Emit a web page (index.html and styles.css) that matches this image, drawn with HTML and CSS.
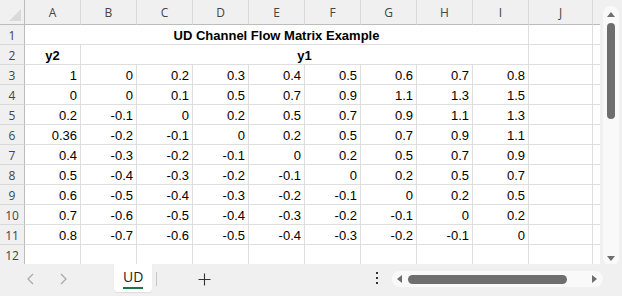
FILE: index.html
```html
<!DOCTYPE html>
<html>
<head>
<meta charset="utf-8">
<link rel="stylesheet" href="styles.css">
</head>
<body>
<div class="app">
  <div class="main">
    <div class="sheet">
      <div class="corner"><span class="tri"></span></div>
      <div class="ch">A</div><div class="ch">B</div><div class="ch">C</div><div class="ch">D</div><div class="ch">E</div><div class="ch">F</div><div class="ch">G</div><div class="ch">H</div><div class="ch">I</div><div class="ch">J</div><div class="ch end"></div>

      <div class="rh">1</div><div class="c title span9">UD Channel Flow Matrix Example</div><div class="c"></div><div class="c end"></div>
      <div class="rh">2</div><div class="c bold ctr">y2</div><div class="c bold ctr span8">y1</div><div class="c"></div><div class="c end"></div>

      <div class="rh">3</div><div class="c n">1</div><div class="c n">0</div><div class="c n">0.2</div><div class="c n">0.3</div><div class="c n">0.4</div><div class="c n">0.5</div><div class="c n">0.6</div><div class="c n">0.7</div><div class="c n">0.8</div><div class="c"></div><div class="c end"></div>
      <div class="rh">4</div><div class="c n">0</div><div class="c n">0</div><div class="c n">0.1</div><div class="c n">0.5</div><div class="c n">0.7</div><div class="c n">0.9</div><div class="c n">1.1</div><div class="c n">1.3</div><div class="c n">1.5</div><div class="c"></div><div class="c end"></div>
      <div class="rh">5</div><div class="c n">0.2</div><div class="c n">-0.1</div><div class="c n">0</div><div class="c n">0.2</div><div class="c n">0.5</div><div class="c n">0.7</div><div class="c n">0.9</div><div class="c n">1.1</div><div class="c n">1.3</div><div class="c"></div><div class="c end"></div>
      <div class="rh">6</div><div class="c n">0.36</div><div class="c n">-0.2</div><div class="c n">-0.1</div><div class="c n">0</div><div class="c n">0.2</div><div class="c n">0.5</div><div class="c n">0.7</div><div class="c n">0.9</div><div class="c n">1.1</div><div class="c"></div><div class="c end"></div>
      <div class="rh">7</div><div class="c n">0.4</div><div class="c n">-0.3</div><div class="c n">-0.2</div><div class="c n">-0.1</div><div class="c n">0</div><div class="c n">0.2</div><div class="c n">0.5</div><div class="c n">0.7</div><div class="c n">0.9</div><div class="c"></div><div class="c end"></div>
      <div class="rh">8</div><div class="c n">0.5</div><div class="c n">-0.4</div><div class="c n">-0.3</div><div class="c n">-0.2</div><div class="c n">-0.1</div><div class="c n">0</div><div class="c n">0.2</div><div class="c n">0.5</div><div class="c n">0.7</div><div class="c"></div><div class="c end"></div>
      <div class="rh">9</div><div class="c n">0.6</div><div class="c n">-0.5</div><div class="c n">-0.4</div><div class="c n">-0.3</div><div class="c n">-0.2</div><div class="c n">-0.1</div><div class="c n">0</div><div class="c n">0.2</div><div class="c n">0.5</div><div class="c"></div><div class="c end"></div>
      <div class="rh">10</div><div class="c n">0.7</div><div class="c n">-0.6</div><div class="c n">-0.5</div><div class="c n">-0.4</div><div class="c n">-0.3</div><div class="c n">-0.2</div><div class="c n">-0.1</div><div class="c n">0</div><div class="c n">0.2</div><div class="c"></div><div class="c end"></div>
      <div class="rh">11</div><div class="c n">0.8</div><div class="c n">-0.7</div><div class="c n">-0.6</div><div class="c n">-0.5</div><div class="c n">-0.4</div><div class="c n">-0.3</div><div class="c n">-0.2</div><div class="c n">-0.1</div><div class="c n">0</div><div class="c"></div><div class="c end"></div>
      <div class="rh">12</div><div class="c"></div><div class="c"></div><div class="c"></div><div class="c"></div><div class="c"></div><div class="c"></div><div class="c"></div><div class="c"></div><div class="c"></div><div class="c"></div><div class="c end"></div>
    </div>
    <div class="vscroll">
      <div class="vtrack">
        <span class="arr up"></span>
        <span class="vthumb"></span>
        <span class="fill"></span>
        <span class="arr down"></span>
      </div>
    </div>
  </div>
  <div class="tabbar">
    <div class="nav">
      <svg width="10" height="12" viewBox="0 0 10 12"><path d="M7 1 L2 6 L7 11" fill="none" stroke="#a8a8a8" stroke-width="1.2"/></svg>
      <svg width="10" height="12" viewBox="0 0 10 12"><path d="M3 1 L8 6 L3 11" fill="none" stroke="#a8a8a8" stroke-width="1.2"/></svg>
    </div>
    <div class="tab"><span class="tabname">UD</span></div>
    <div class="sep"></div>
    <div class="plus">
      <svg width="13" height="13" viewBox="0 0 13 13"><path d="M6.5 0.5 V12.5 M0.5 6.5 H12.5" stroke="#333" stroke-width="1.1"/></svg>
    </div>
    <div class="spacer"></div>
    <div class="dots"><span></span><span></span><span></span></div>
    <div class="hscroll">
      <span class="harr left"></span>
      <span class="hthumb"></span>
      <span class="hfill"></span>
      <span class="harr right"></span>
    </div>
  </div>
</div>
</body>
</html>
```

FILE: styles.css
```css
* { box-sizing: border-box; }
html, body { margin: 0; padding: 0; }
body {
  width: 622px;
  height: 296px;
  overflow: hidden;
  background: #f0f0f0;
  font-family: "Liberation Sans", Arial, sans-serif;
}
.app {
  display: flex;
  flex-direction: column;
  width: 622px;
  height: 296px;
}
.main {
  display: flex;
  height: 264px;
  overflow: hidden;
}
.sheet {
  width: 600px;
  display: grid;
  grid-template-columns: 25px repeat(9, 56px) 64px 7px;
  grid-template-rows: 25px repeat(12, 20px);
  background: #fff;
  align-content: start;
}
.corner {
  background: #f0f0f0;
  border-right: 1px solid #bcbcbc;
  border-bottom: 1px solid #bcbcbc;
  position: relative;
}
.tri {
  position: absolute;
  right: 3px;
  bottom: 3px;
  width: 0;
  height: 0;
  border-left: 12px solid transparent;
  border-bottom: 12px solid #dadada;
}
.ch {
  background: #f0f0f0;
  border-right: 1px solid #d9d9d9;
  border-bottom: 1px solid #bcbcbc;
  font-family: "Open Sans", "Noto Sans", sans-serif;
  font-size: 12px;
  color: #444;
  display: flex;
  align-items: center;
  justify-content: center;
  padding-top: 1px;
}
.ch.end { border-right: none; }
.rh {
  background: #f0f0f0;
  border-right: 1px solid #bcbcbc;
  border-bottom: 1px solid #d9d9d9;
  font-family: "Open Sans", "Noto Sans", sans-serif;
  font-size: 12px;
  color: #444;
  display: flex;
  align-items: center;
  justify-content: center;
  padding-top: 1px;
}
.c {
  border-right: 1px solid #dedede;
  border-bottom: 1px solid #dedede;
  font-size: 13px;
  color: #000;
  display: flex;
  align-items: center;
  padding: 1px 3px 0 3px;
  white-space: nowrap;
  overflow: hidden;
}
.c.end { border-right: none; }
.n { justify-content: flex-end; }
.ctr { justify-content: center; }
.bold { font-weight: bold; }
.title { font-weight: bold; justify-content: center; grid-column: span 9; }
.span9 { grid-column: span 9; }
.span8 { grid-column: span 8; }

.vscroll {
  width: 22px;
  background: #f0f0f0;
  padding: 6px 3px 0 3px;
  display: flex;
}
.vtrack {
  width: 16px;
  height: 260px;
  background: #f9f9f9;
  border-radius: 8px;
  display: flex;
  flex-direction: column;
  align-items: center;
  padding: 6px 0 5px 0;
}
.arr {
  width: 0;
  height: 0;
  border-left: 4px solid transparent;
  border-right: 4px solid transparent;
}
.arr.up { border-bottom: 5px solid #6e6e6e; }
.arr.down { border-top: 5px solid #6e6e6e; }
.vthumb {
  margin-top: 6px;
  width: 8px;
  height: 96px;
  background: #6e6e6e;
  border-radius: 4px;
}
.fill { flex: 1; }

.tabbar {
  height: 32px;
  display: flex;
  align-items: flex-start;
  background: #f0f0f0;
}
.nav {
  display: flex;
  gap: 22px;
  padding: 9px 0 0 26px;
  width: 114px;
}
.tab {
  width: 38px;
  height: 28px;
  background: #fff;
  border-radius: 0 0 4px 4px;
  display: flex;
  flex-direction: column;
  align-items: center;
  padding-top: 5px;
  box-shadow: 0 1px 1px rgba(0,0,0,0.08);
}
.tabname {
  font-family: "Open Sans", "Noto Sans", sans-serif;
  font-size: 14px;
  color: #222;
  line-height: 16px;
  padding-bottom: 2px;
  border-bottom: 2px solid #17793f;
  width: 20px;
  text-align: center;
}
.sep {
  width: 1px;
  height: 14px;
  background: #c6c6c6;
  margin: 8px 0 0 4px;
}
.plus {
  margin: 9px 0 0 41px;
  display: flex;
}
.spacer { flex: 1; }
.dots {
  display: flex;
  flex-direction: column;
  gap: 3px;
  margin: 8px 14px 0 0;
}
.dots span {
  width: 2px;
  height: 2px;
  background: #333;
}
.hscroll {
  width: 211px;
  height: 16px;
  margin: 7px 19px 0 0;
  background: #f9f9f9;
  border-radius: 8px;
  display: flex;
  align-items: center;
  padding: 0 6px 0 5px;
}
.harr {
  width: 0;
  height: 0;
  border-top: 4px solid transparent;
  border-bottom: 4px solid transparent;
}
.harr.left { border-right: 5px solid #6e6e6e; }
.harr.right { border-left: 5px solid #6e6e6e; }
.hthumb {
  margin-left: 6px;
  width: 159px;
  height: 9px;
  background: #6e6e6e;
  border-radius: 5px;
}
.hfill { flex: 1; }
```
